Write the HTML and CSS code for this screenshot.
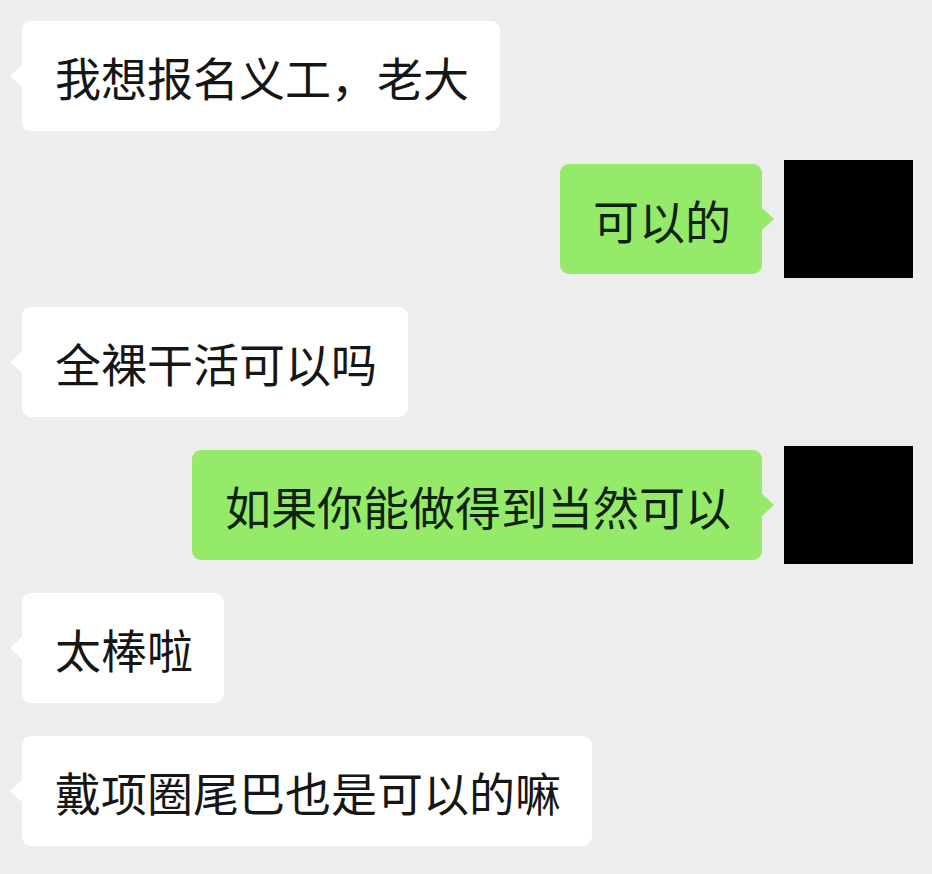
FILE: index.html
```html
<!DOCTYPE html>
<html lang="zh-CN">
<head>
    <meta charset="UTF-8">
    <meta name="viewport" content="width=device-width, initial-scale=1.0">
    <title>聊天记录</title>
    <link rel="stylesheet" href="styles.css">
</head>
<body>

    <div class="chat">
        <!-- incoming -->
        <div class="row left">
            <div class="bubble white">我想报名义工，老大</div>
        </div>

        <!-- outgoing -->
        <div class="row right">
            <div class="bubble green">可以的</div>
            <div class="avatar"></div>
        </div>

        <div class="row left">
            <div class="bubble white">全裸干活可以吗</div>
        </div>

        <div class="row right">
            <div class="bubble green">如果你能做得到当然可以</div>
            <div class="avatar"></div>
        </div>

        <div class="row left">
            <div class="bubble white">太棒啦</div>
        </div>

        <div class="row left">
            <div class="bubble white">戴项圈尾巴也是可以的嘛</div>
        </div>
    </div>

</body>
</html>
```

FILE: styles.css
```css
body {
    margin: 0;
    background: #ededed;
    font-family: "Noto Sans CJK SC", "Noto Sans", sans-serif;
    color: #161616;
}

.chat {
    display: flex;
    flex-direction: column;
    gap: 33px;
    padding: 21px 19px 0 22px;
}

.row {
    display: flex;
    align-items: center;
    gap: 22px;
    height: 110px;
}

.row.right {
    justify-content: flex-end;
}

.bubble {
    position: relative;
    height: 110px;
    box-sizing: border-box;
    padding: 0 31px 0 33px;
    display: flex;
    align-items: center;
    font-size: 46px;
    line-height: 1;
    border-radius: 9px;
    white-space: nowrap;
}

.bubble.white {
    background: #ffffff;
}

.bubble.green {
    background: #95ea6a;
    color: #0f230c;
}

/* little tails */
.bubble::before {
    content: "";
    position: absolute;
    top: 50%;
    width: 0;
    height: 0;
    border-top: 12px solid transparent;
    border-bottom: 12px solid transparent;
    transform: translateY(-50%);
}

.bubble.white::before {
    left: -12px;
    border-right: 13px solid #ffffff;
}

.bubble.green::before {
    right: -12px;
    border-left: 13px solid #95ea6a;
}

.avatar {
    width: 129px;
    height: 118px;
    background: #000;
    flex-shrink: 0;
}
```
